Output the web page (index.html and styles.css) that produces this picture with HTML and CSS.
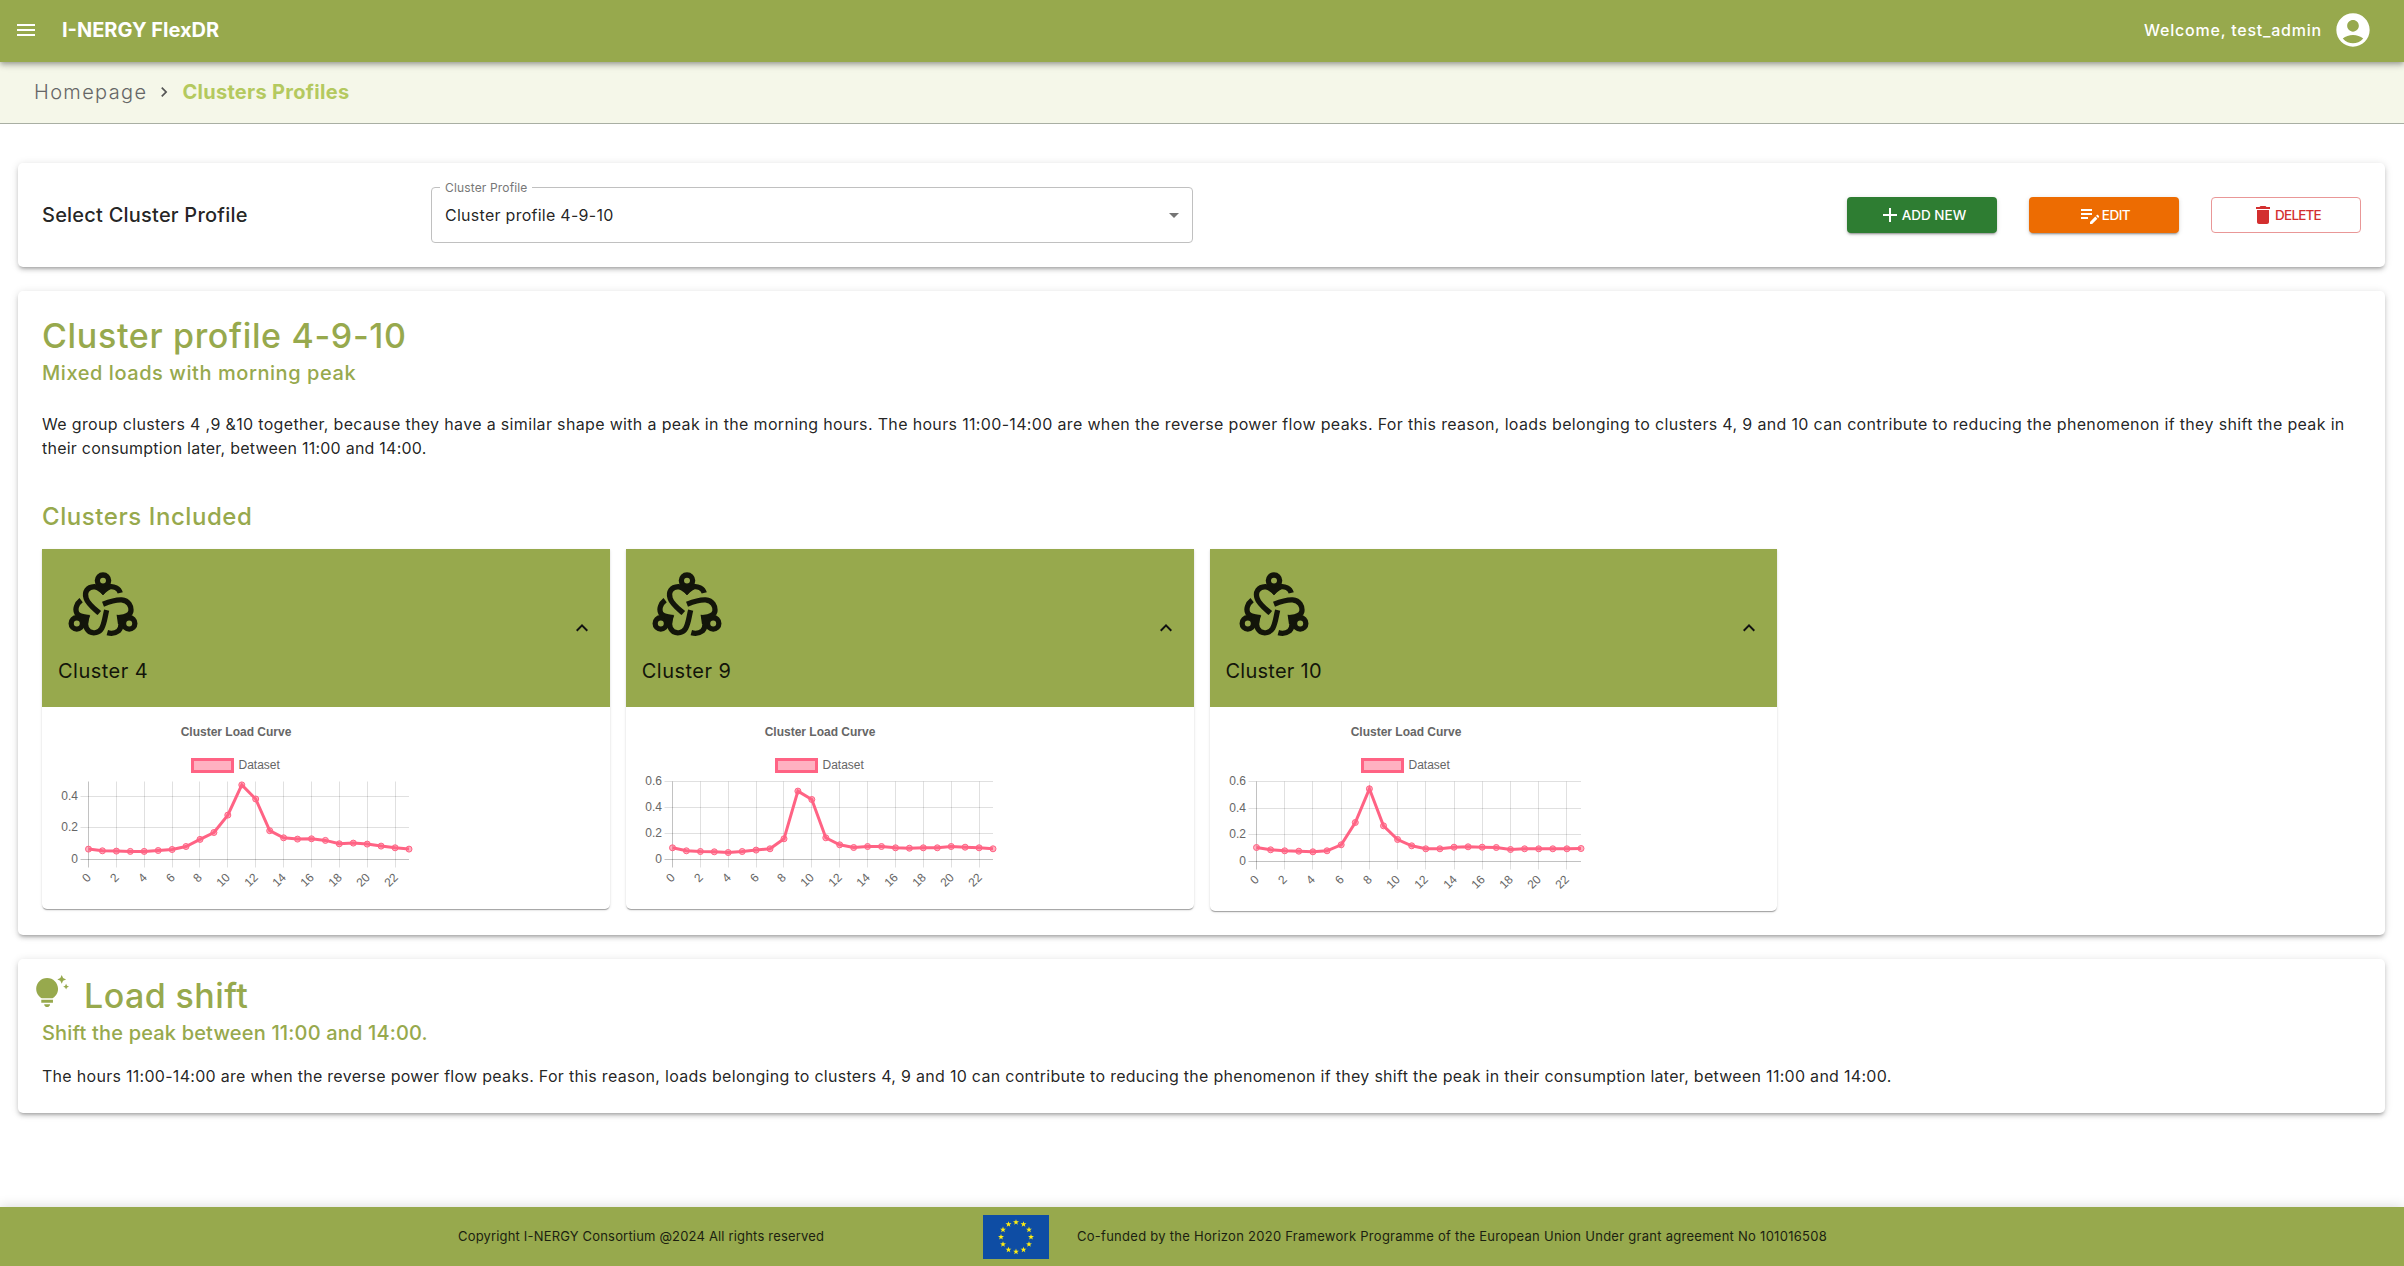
FILE: index.html
```html
<!DOCTYPE html>
<html lang="en">
<head>
<meta charset="utf-8">
<title>I-NERGY FlexDR</title>
<link rel="stylesheet" href="styles.css">
</head>
<body>
<svg class="defs" width="0" height="0">
  <symbol id="knot" viewBox="39 36 210 193">
    <g fill="none" stroke="currentColor" stroke-width="16">
      <circle cx="144" cy="62" r="17"/>
      <circle cx="65" cy="191" r="17"/>
      <circle cx="223" cy="191" r="17"/>
      <path d="M196 99C192 84 176 79 166 80C156 82 151 89 144 95C137 89 130 81 118 80C96 81 87 97 93 115C98 132 118 147 133 160"/>
      <path d="M144 133C164 125 184 119 200 120C222 122 230 140 228 155C224 169 210 171 196 173C200 188 202 202 190 214C180 222 168 222 157 219"/>
      <path d="M78 121C64 132 59 148 65 160C71 170 83 170 95 173C90 187 89 206 103 216C116 223 132 219 140 206C149 190 150 170 155 151"/>
    </g>
    <path fill="currentColor" d="M125 84h38l-19 22zM75 167l28-2-4 28-18 0zM213 167l-28-2 4 28 18 0z"/>
  </symbol>
</svg>
<header class="topbar">
  <svg class="icon" viewBox="0 0 24 24"><path d="M3 18h18v-2H3zm0-5h18v-2H3zm0-7v2h18V6z"/></svg>
  <span class="brand">I-NERGY FlexDR</span>
  <span class="welcome">Welcome, test_admin</span>
  <svg class="avatar" viewBox="0 0 24 24"><path d="M12 2C6.48 2 2 6.48 2 12s4.48 10 10 10 10-4.48 10-10S17.52 2 12 2m0 4c1.93 0 3.5 1.57 3.5 3.5S13.93 13 12 13s-3.5-1.57-3.5-3.5S10.07 6 12 6m0 14c-2.03 0-4.43-.82-6.14-2.88C7.55 15.8 9.68 15 12 15s4.45.8 6.14 2.12C16.43 19.18 14.03 20 12 20"/></svg>
</header>
<nav class="crumbs">
  <span class="crumb">Homepage</span>
  <svg class="crumb-sep" viewBox="0 0 24 24"><path d="M10 6 8.59 7.41 13.17 12l-4.58 4.59L10 18l6-6z"/></svg>
  <span class="crumb-current">Clusters Profiles</span>
</nav>
<main>
  <section class="card selector">
    <h2 class="selector-title">Select Cluster Profile</h2>
    <fieldset class="select">
      <legend>Cluster Profile</legend>
      <span class="select-value">Cluster profile 4-9-10</span>
      <svg class="icon" viewBox="0 0 24 24"><path d="M7 10l5 5 5-5z"/></svg>
    </fieldset>
    <div class="actions">
      <button class="btn add"><svg class="icon" viewBox="0 0 24 24"><path d="M19 13h-6v6h-2v-6H5v-2h6V5h2v6h6z"/></svg><span>ADD NEW</span></button>
      <button class="btn edit"><svg class="icon" viewBox="0 0 24 24"><path d="M3 10h11v2H3zm0-2h11V6H3zm0 8h7v-2H3zm15.01-3.13.71-.71c.39-.39 1.02-.39 1.41 0l.71.71c.39.39.39 1.02 0 1.41l-.71.71zm-.71.71-5.3 5.3V21h2.12l5.3-5.3z"/></svg><span>EDIT</span></button>
      <button class="btn delete"><svg class="icon" viewBox="0 0 24 24"><path d="M6 19c0 1.1.9 2 2 2h8c1.1 0 2-.9 2-2V7H6zM19 4h-3.5l-1-1h-5l-1 1H5v2h14z"/></svg><span>DELETE</span></button>
    </div>
  </section>

  <section class="card profile">
    <h1 class="profile-name">Cluster profile 4-9-10</h1>
    <h3 class="profile-sub">Mixed loads with morning peak</h3>
    <p class="text"><span class="desc-a">We group clusters 4 ,9 &amp;10 together, because they have a similar shape with a peak in the morning hours. The hours 11:00-14:00 are when the reverse power flow peaks. For this reason, loads belonging to clusters 4, 9 and 10 can contribute to reducing the phenomenon if they shift the peak in</span><br><span class="desc-b">their consumption later, between 11:00 and 14:00.</span></p>
    <h2 class="included">Clusters Included</h2>
    <div class="clusters">
      <article class="cluster">
        <header><div class="cluster-id"><svg class="knot"><use href="#knot"/></svg><span class="name">Cluster 4</span></div><svg class="icon" viewBox="0 0 24 24"><path d="m12 8-6 6 1.41 1.41L12 10.83l4.59 4.58L18 14z"/></svg></header>
        <div class="chart" data-chart="0"></div>
      </article>
      <article class="cluster">
        <header><div class="cluster-id"><svg class="knot"><use href="#knot"/></svg><span class="name">Cluster 9</span></div><svg class="icon" viewBox="0 0 24 24"><path d="m12 8-6 6 1.41 1.41L12 10.83l4.59 4.58L18 14z"/></svg></header>
        <div class="chart" data-chart="1"></div>
      </article>
      <article class="cluster">
        <header><div class="cluster-id"><svg class="knot"><use href="#knot"/></svg><span class="name name-long">Cluster 10</span></div><svg class="icon" viewBox="0 0 24 24"><path d="m12 8-6 6 1.41 1.41L12 10.83l4.59 4.58L18 14z"/></svg></header>
        <div class="chart" data-chart="2"></div>
      </article>
    </div>
  </section>

  <section class="card shift">
    <div class="shift-head">
      <svg class="bulb" viewBox="0 0 24 24"><path d="M7 20h4c0 1.1-.9 2-2 2s-2-.9-2-2m-2-1h8v-2H5zm11.5-9.5c0 3.82-2.66 5.86-3.77 6.5H5.27c-1.11-.64-3.77-2.68-3.77-6.5C1.5 5.36 4.86 2 9 2s7.5 3.36 7.5 7.5m4.87-2.13L20 8l1.37.63L22 10l.63-1.37L24 8l-1.37-.63L22 6zM19 6l.94-2.06L22 3l-2.06-.94L19 0l-.94 2.06L16 3l2.06.94z"/></svg>
      <h1 class="shift-name">Load shift</h1>
    </div>
    <h3 class="shift-sub">Shift the peak between 11:00 and 14:00.</h3>
    <p class="text"><span class="shift-text">The hours 11:00-14:00 are when the reverse power flow peaks. For this reason, loads belonging to clusters 4, 9 and 10 can contribute to reducing the phenomenon if they shift the peak in their consumption later, between 11:00 and 14:00.</span></p>
  </section>
</main>
<footer class="footer">
  <span class="copyright">Copyright I-NERGY Consortium @2024 All rights reserved</span>
  <svg class="flag" viewBox="0 0 66 44"><rect width="66" height="44" fill="#0e4da4"/><g id="stars" fill="#ffee11"></g></svg>
  <span class="funding">Co-funded by the Horizon 2020 Framework Programme of the European Union Under grant agreement No 101016508</span>
</footer>
<script src="charts.js"></script>
</body>
</html>
```
FILE: charts.js
```js
const charts = [
  { step: 31.6, top: 74.5, zero: 152.5, x0: 46.5, x1: 367, max: 0.4, label: 36, mid: 194,
    data: [.0656,.055,.053,.051,.051,.057,.0635,.0825,.127,.171,.281,.472,.383,.182,.1375,.129,.131,.1206,.0995,.104,.0974,.085,.074,.0656] },
  { step: 26, top: 74.5, zero: 152.5, x0: 46.5, x1: 367, max: 0.6, label: 36, mid: 194,
    data: [.09,.067,.0615,.059,.054,.0615,.072,.082,.159,.526,.4615,.167,.113,.092,.1,.1,.09,.087,.09,.09,.1,.095,.09,.082] },
  { step: 26.67, top: 74.5, zero: 154.5, x0: 46.5, x1: 371, max: 0.6, label: 36, mid: 196,
    data: [.105,.0875,.08,.0775,.0725,.08,.125,.2925,.545,.2675,.165,.1175,.095,.095,.1075,.11,.1075,.105,.09,.095,.095,.095,.095,.0975] }
];

const snap = v => Math.floor(v) + 0.5;

charts.forEach((c, i) => {
  const px = n => c.x0 + n * (c.x1 - c.x0) / 23;
  const py = v => c.zero - v / 0.2 * c.step;
  const height = c.zero + 49.5;
  let s = `<svg width="560" height="${height}">`;
  s += `<text class="chart-title" x="${c.mid}" y="29">Cluster Load Curve</text>`;
  s += `<rect x="${c.mid - 43.5}" y="52.5" width="40" height="12" fill="#ffb1c1" stroke="#ff6384" stroke-width="3"/>`;
  s += `<text class="chart-label" x="${c.mid + 2.5}" y="62">Dataset</text>`;
  for (let n = 0; n < 24; n += 2) {
    const x = snap(px(n));
    s += `<path class="${n ? 'grid' : 'axis'}" d="M${x} ${c.top}V${c.zero + 8}"/>`;
    s += `<text class="chart-label end" transform="translate(${x - 2.5} ${c.zero + 13}) rotate(-45)" dy="8">${n}</text>`;
  }
  for (let k = 0; k * 0.2 <= c.max + 0.01; k++) {
    const y = snap(py(k * 0.2));
    s += `<path class="${k ? 'grid' : 'axis'}" d="M${c.x0 - 8} ${y}H${c.x1}"/>`;
    s += `<text class="chart-label end" x="${c.label}" y="${y + 3.5}">${k ? (k * 0.2).toFixed(1) : 0}</text>`;
  }
  s += `<polyline class="line" points="${c.data.map((v, n) => px(n).toFixed(1) + ',' + py(v).toFixed(1)).join(' ')}"/>`;
  c.data.forEach((v, n) => { s += `<circle class="dot" cx="${px(n).toFixed(1)}" cy="${py(v).toFixed(1)}" r="3"/>`; });
  document.querySelector(`[data-chart="${i}"]`).innerHTML = s + '</svg>';
});

let stars = '';
for (let k = 0; k < 12; k++) {
  const cx = 33 + 15 * Math.sin(k * Math.PI / 6), cy = 22 - 14.7 * Math.cos(k * Math.PI / 6);
  const pts = [];
  for (let j = 0; j < 10; j++) {
    const r = j % 2 ? 1.25 : 3.1;
    pts.push((cx + r * Math.sin(j * Math.PI / 5)).toFixed(2) + ',' + (cy - r * Math.cos(j * Math.PI / 5)).toFixed(2));
  }
  stars += `<polygon points="${pts.join(' ')}"/>`;
}
document.getElementById('stars').innerHTML = stars;
```
FILE: styles.css
```css
* { box-sizing: border-box; }
body { margin: 0; height: 1266px; display: flex; flex-direction: column; background: #fff; color: rgba(0,0,0,.87); font-family: Inter, "Open Sans", sans-serif; overflow: hidden; }
h1, h2, h3, p { margin: 0; }
h1, h2, h3, span { white-space: nowrap; }
svg { display: block; flex: none; fill: currentColor; }
.defs { position: absolute; }
.icon { width: 24px; height: 24px; }

.topbar { height: 62px; flex: none; display: flex; align-items: center; padding: 0 31px 2px 14px; background: #97a94d; color: #fff; position: relative; z-index: 1; box-shadow: 0 2px 4px -1px rgba(0,0,0,.2), 0 4px 5px rgba(0,0,0,.14), 0 1px 10px rgba(0,0,0,.12); }
.brand { margin-left: 24px; font-size: 20px; font-weight: 700; line-height: 28px; }
.welcome { margin-left: auto; font-size: 16px; font-weight: 500; line-height: 24px; padding-bottom: 1px; letter-spacing: .78px; }
.avatar { width: 40px; height: 40px; margin-left: 11px; }

.crumbs { height: 62px; flex: none; display: flex; align-items: center; padding: 0 0 2px 34px; background: #f5f7e9; border-bottom: 1px solid #a9afa3; font-size: 20px; line-height: 30px; }
.crumb { color: #666; font-weight: 300; letter-spacing: 1.35px; }
.crumb-sep { width: 20px; height: 20px; margin: 0 8px 0 7px; color: #555; }
.crumb-current { color: #b4c95f; font-weight: 700; letter-spacing: .3px; }

main { padding: 39px 19px 0 18px; display: flex; flex-direction: column; gap: 24px; flex: 1; }
.card { background: #fff; border-radius: 5px; padding: 24px; box-shadow: 0 3px 3px -2px rgba(0,0,0,.2), 0 3px 4px rgba(0,0,0,.14), 0 1px 8px rgba(0,0,0,.12); }
.selector { height: 104px; display: flex; align-items: center; }
.selector-title { width: 389px; font-size: 20px; font-weight: 500; line-height: 32px; letter-spacing: .22px; }
.select { width: 762px; height: 61px; margin: -5px 0 0; border: 1px solid #c0c0c0; border-radius: 4px; padding: 0 6px 5px 13px; display: flex; align-items: center; font-size: 16px; }
.select legend { margin-left: -5px; padding: 0 5px; font-size: 12px; line-height: 11px; color: #777; height: 11px; letter-spacing: .15px; }
.select-value { letter-spacing: .27px; }
.select .icon { margin-left: auto; color: #757575; }
.actions { margin-left: auto; display: flex; gap: 32px; }
.btn { width: 150px; height: 36px; border: 0; border-radius: 4px; padding: 0; display: flex; align-items: center; justify-content: center; font: 500 13.5px/24px Inter, sans-serif; color: #fff; box-shadow: 0 3px 1px -2px rgba(0,0,0,.2), 0 2px 2px rgba(0,0,0,.14), 0 1px 5px rgba(0,0,0,.12); }
.add { background: #2e7d32; }
.edit { background: #ed6c02; letter-spacing: -.5px; }
.delete { background: #fff; color: #d32f2f; border: 1px solid #e99797; box-shadow: none; letter-spacing: -.8px; }

h1 { font-size: 34px; font-weight: 500; line-height: 42px; color: #97a94d; }
h3 { font-size: 20px; font-weight: 500; line-height: 32px; color: #97a94d; }
.text { font-size: 16px; line-height: 24px; }
.profile { height: 644px; }
.profile-name { letter-spacing: .66px; }
.profile-sub { letter-spacing: .56px; }
.profile .text { margin-top: 23px; }
.desc-a { letter-spacing: .336px; }
.desc-b { letter-spacing: .23px; }
.included { margin: 41px 0 16px; font-size: 24px; font-weight: 500; line-height: 32px; letter-spacing: .57px; color: #97a94d; }
.clusters { display: grid; grid-template-columns: repeat(4, 1fr); gap: 16px; align-items: start; height: 362px; }
.cluster { background: #fff; border-radius: 0 0 5px 5px; box-shadow: 0 2px 1px -1px rgba(0,0,0,.2), 0 1px 1px rgba(0,0,0,.14), 0 1px 3px rgba(0,0,0,.12); }
.cluster header { height: 158px; background: #97a94d; display: flex; justify-content: space-between; align-items: center; padding: 0 16px; }
.cluster header .icon { color: #111; }
.cluster-id { display: flex; flex-direction: column; align-items: center; gap: 19px; padding-top: 3px; font-size: 20px; font-weight: 400; line-height: 32px; color: #13150a; }
.name { letter-spacing: .47px; }
.name-long { letter-spacing: .25px; }
.knot { width: 70px; height: 64px; }
.chart-title, .chart-label { font: 12px "Liberation Sans", sans-serif; fill: #666; }
.chart-title { font-weight: 700; text-anchor: middle; }
.end { text-anchor: end; }
.grid { stroke: rgba(0,0,0,.12); }
.axis { stroke: rgba(0,0,0,.24); }
.line { fill: none; stroke: #ff6384; stroke-width: 3; }
.dot { fill: rgba(255,99,132,.5); stroke: #ff6384; }

.shift { height: 154px; padding-top: 16px; }
.shift-head { display: flex; gap: 15px; margin-left: -8px; }
.bulb { width: 35px; height: 35px; color: #97a94d; }
.shift-name { letter-spacing: .42px; }
.shift-sub { letter-spacing: .17px; }
.shift .text { margin-top: 15px; }
.shift-text { letter-spacing: .285px; }

.footer { height: 59px; flex: none; display: flex; align-items: center; padding: 0 0 0 458px; background: #97a94d; color: #1b1f10; font-size: 13px; line-height: 20px; box-shadow: 0 0 12px rgba(0,0,0,.16); }
.footer span { padding-bottom: 1px; }
.copyright { width: 366px; letter-spacing: .175px; }
.funding { letter-spacing: .27px; }
.flag { width: 66px; height: 44px; margin: 0 28px 0 159px; }
```
